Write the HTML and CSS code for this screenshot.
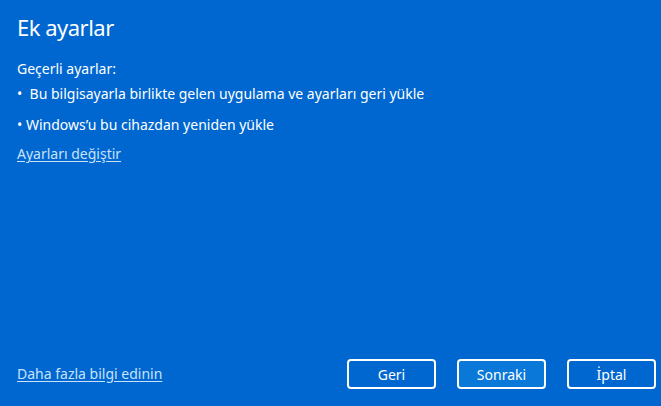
FILE: index.html
```html
<!DOCTYPE html>
<html lang="tr">
<head>
<meta charset="utf-8">
<title>Ek ayarlar</title>
<link rel="stylesheet" href="styles.css">
</head>
<body>
<div class="dialog">
  <h1 class="title">Ek ayarlar</h1>
  <p class="label">Geçerli ayarlar:</p>
  <p class="item item-first">•&nbsp; Bu bilgisayarla birlikte gelen uygulama ve ayarları geri yükle</p>
  <p class="item">• Windows’u bu cihazdan yeniden yükle</p>
  <a class="link change" href="#">Ayarları değiştir</a>
  <div class="footer">
    <a class="link" href="#">Daha fazla bilgi edinin</a>
    <div class="buttons">
      <button class="btn">Geri</button>
      <button class="btn btn-primary">Sonraki</button>
      <button class="btn">İptal</button>
    </div>
  </div>
</div>
</body>
</html>
```
FILE: styles.css
```css
html, body {
  margin: 0;
  padding: 0;
}
body {
  background: #0067d0;
  font-family: "Noto Sans", "Open Sans", sans-serif;
  color: #ffffff;
}
.dialog {
  box-sizing: border-box;
  width: 661px;
  height: 406px;
  padding: 12px 5px 17px 17px;
  display: flex;
  flex-direction: column;
  align-items: flex-start;
}
.title {
  margin: 0;
  font-size: 22px;
  line-height: 30px;
  font-weight: 400;
  letter-spacing: -0.5px;
}
.label, .item {
  margin: 0;
  font-size: 14px;
  line-height: 20px;
}
.label {
  margin-top: 17px;
}
.item-first {
  margin-top: 5px;
}
.item + .item {
  margin-top: 11px;
}
.link {
  font-size: 14px;
  line-height: 20px;
  color: #c8e2fa;
  text-decoration: underline;
  text-underline-offset: 2px;
}
.change {
  margin-top: 9px;
}
.footer {
  margin-top: auto;
  align-self: stretch;
  display: flex;
  align-items: center;
  justify-content: space-between;
}
.buttons {
  display: flex;
  gap: 21px;
}
.btn {
  box-sizing: border-box;
  width: 89px;
  height: 30px;
  border: 2px solid #ffffff;
  border-radius: 4px;
  background: transparent;
  color: #ffffff;
  font-family: inherit;
  font-size: 14px;
  padding: 0;
}
.btn-primary {
  background: #0a78d8;
}
```
